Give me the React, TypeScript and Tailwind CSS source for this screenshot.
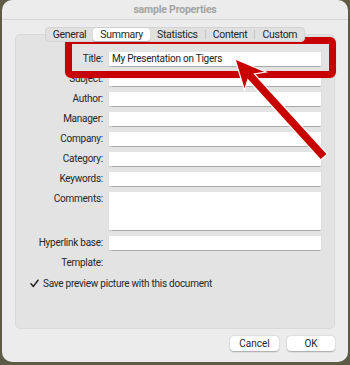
import React from 'react';

const font = { fontFamily: 'Roboto, "Liberation Sans", Arial, sans-serif' };

const Field = ({ label, tall }: { label: string; tall?: boolean }) => (
  <div className="flex items-start">
    <div className="w-[93px] pr-[6px] text-right text-[10px] tracking-[-0.25px] leading-[14px] text-[#262626]">{label}</div>
    <div
      className={`w-[212px] bg-white shadow-[0_0.5px_1px_rgba(0,0,0,0.25)] ${tall ? 'h-[38px]' : 'h-[14px]'}`}
    />
  </div>
);

const tabs = ['General', 'Summary', 'Statistics', 'Content', 'Custom'];

export default function App() {
  return (
    <div className="relative w-[350px] h-[365px] bg-[#5d5b45] overflow-hidden" style={font}>
      <div className="ml-[2px] w-[346px] h-[362px] rounded-[10px] bg-[#ececec] flex flex-col">
        <div className="h-[20px] border-b border-[#d6d6d6] flex items-center justify-center text-[10.5px] tracking-[-0.2px] font-bold text-[#a3a3a3]">
          sample Properties
        </div>

        <div className="px-[13px] pt-[7px] flex flex-col">
          <div className="relative z-10 flex justify-center">
            <div className="flex items-center h-[15px] bg-[#e0e0e0] rounded-[4px] border border-[#d4d4d4]">
              {tabs.map((t, i) => (
                <div key={t} className="flex items-center">
                  {i > 2 && <div className="w-px h-[9px] bg-[#c4c4c4]" />}
                  <div
                    className={`px-[7px] h-[13px] flex items-center text-[10.5px] tracking-[-0.3px] text-[#262626] rounded-[3px] ${
                      t === 'Summary' ? 'bg-white shadow-[0_0.5px_1px_rgba(0,0,0,0.2)]' : ''
                    }`}
                  >
                    {t}
                  </div>
                </div>
              ))}
            </div>
          </div>

          <div className="-mt-[8px] h-[295px] rounded-[5px] bg-[#e3e3e3] border border-[#d9d9d9] pt-[17px] flex flex-col gap-[6px]">
            <div className="flex items-start">
              <div className="w-[93px] pr-[6px] text-right text-[10px] tracking-[-0.25px] leading-[14px] text-[#262626]">Title:</div>
              <div className="w-[212px] h-[14px] bg-white shadow-[0_0.5px_1px_rgba(0,0,0,0.25)] text-[10px] tracking-[-0.25px] leading-[14px] text-[#222] pl-[3px]">
                My Presentation on Tigers
              </div>
            </div>
            <Field label="Subject:" />
            <Field label="Author:" />
            <Field label="Manager:" />
            <Field label="Company:" />
            <Field label="Category:" />
            <Field label="Keywords:" />
            <Field label="Comments:" tall />
            <Field label="Hyperlink base:" />
            <div className="flex items-start">
              <div className="w-[93px] pr-[6px] text-right text-[10px] tracking-[-0.25px] leading-[14px] text-[#262626]">Template:</div>
            </div>
            <div className="flex items-center pl-[13px] gap-[4px] h-[14px]">
              <div className="w-[10px] h-[10px] flex items-center justify-center">
                <svg width="9" height="9" viewBox="0 0 9 9">
                  <path d="M1 4.8 L3.4 7.4 L8 1.2" stroke="#222" strokeWidth="1.5" fill="none" strokeLinecap="round" strokeLinejoin="round" />
                </svg>
              </div>
              <span className="text-[10px] tracking-[-0.25px] text-[#262626]">Save preview picture with this document</span>
            </div>
          </div>

          <div className="mt-[7px] flex justify-end gap-[8px]">
            <button className="w-[49px] h-[15px] bg-white rounded-[4px] shadow-[0_0.5px_1.5px_rgba(0,0,0,0.3)] text-[10px] leading-[15px] text-[#262626]">
              Cancel
            </button>
            <button className="w-[48px] h-[15px] bg-white rounded-[4px] shadow-[0_0.5px_1.5px_rgba(0,0,0,0.3)] text-[10px] leading-[15px] text-[#262626]">
              OK
            </button>
          </div>
        </div>
      </div>

      {/* annotation: red highlight box */}
      <div className="absolute left-[65px] top-[37px] w-[271px] h-[41px] border-[7px] border-[#c90000] rounded-[6px] shadow-[0_0_1px_rgba(0,0,0,0.3)]" />

      {/* annotation: arrow */}
      <svg className="absolute left-0 top-0" width="350" height="365" viewBox="0 0 350 365">
        <polygon
          points="235,59 266,72 254.4,73.8 327.3,154 320.7,160 247.8,79.8 244.5,90.5"
          fill="#c90000"
          stroke="#ffffff"
          strokeWidth="1.2"
          strokeLinejoin="miter"
        />
      </svg>
    </div>
  );
}
